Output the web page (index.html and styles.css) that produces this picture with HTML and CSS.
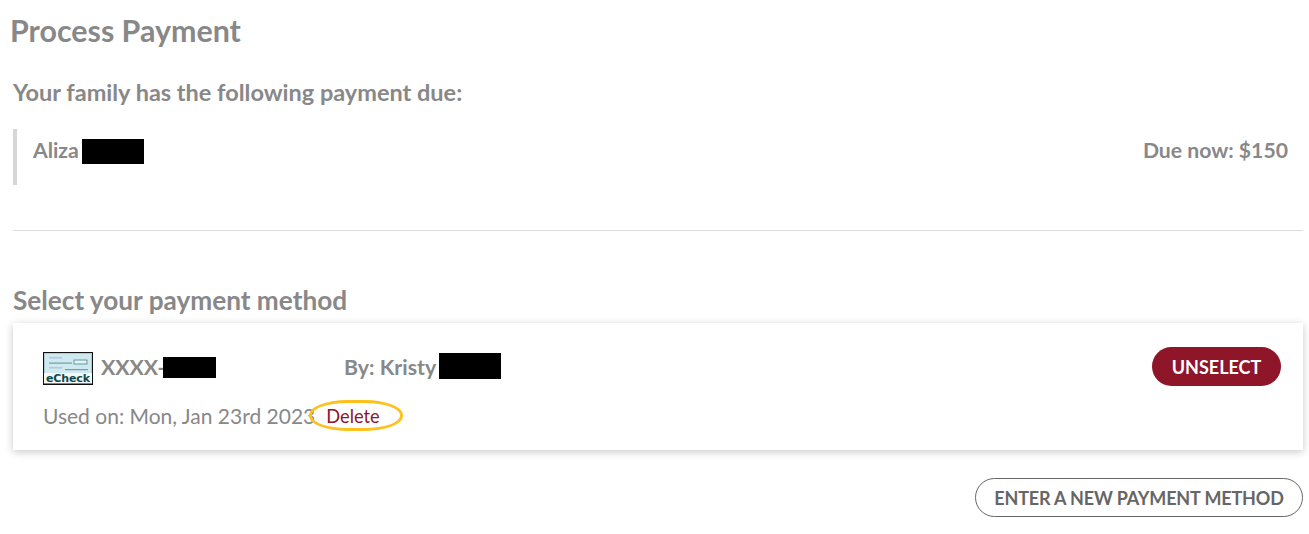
FILE: index.html
```html
<!DOCTYPE html>
<html lang="en">
<head>
<meta charset="UTF-8">
<meta name="viewport" content="width=device-width, initial-scale=1.0">
<title>Process Payment</title>
<link rel="stylesheet" href="styles.css">
</head>
<body>
<div class="container">
    <h1 class="page-title">Process Payment</h1>
    <h2 class="due-title">Your family has the following payment due:</h2>

    <div class="due-row">
        <div class="due-name">Aliza<span class="redact redact-due"></span></div>
        <div class="due-amount">Due now: $150</div>
    </div>

    <hr class="divider">

    <h2 class="method-title">Select your payment method</h2>

    <div class="card">
        <div class="card-top">
            <svg class="echeck" viewBox="0 0 50 33" width="50" height="33">
                <rect x="0.5" y="0.5" width="49" height="32" fill="#d5ebf1" stroke="#111"/>
                <rect x="1.5" y="1.5" width="47" height="20" fill="#d0e8ef" stroke="#8fbcc0" stroke-width="0.6"/>
                <rect x="6" y="5" width="13" height="1.5" fill="#a9cdd4"/>
                <rect x="31" y="8" width="13" height="4" fill="#e4f2f5" stroke="#5f9ba1"/>
                <rect x="6" y="10.5" width="23" height="1.2" fill="#6ba3a9"/>
                <rect x="6" y="15" width="13" height="1.5" fill="#a9cdd4"/>
                <rect x="22" y="17" width="23" height="1.2" fill="#6ba3a9"/>
                <rect x="1" y="21" width="48" height="11" fill="#f4f8f8"/>
                <rect x="0" y="31.5" width="50" height="1.5" fill="#111"/>
                <text x="25" y="30" text-anchor="middle" textLength="44" class="echeck-text">eCheck</text>
            </svg>
            <div class="account">XXXX-<span class="redact redact-account"></span></div>
            <div class="owner">By: Kristy<span class="redact redact-owner"></span></div>
            <button class="btn-unselect">UNSELECT</button>
        </div>
        <div class="card-bottom">
            <span class="used-on">Used on: Mon, Jan 23rd 2023</span>
            <a class="delete-link">Delete</a>
        </div>
    </div>

    <div class="actions">
        <button class="btn-new">ENTER A NEW PAYMENT METHOD</button>
    </div>
</div>
</body>
</html>
```

FILE: styles.css
```css
body {
    margin: 0;
    padding: 0;
    font-family: Lato, sans-serif;
    background-color: #fff;
    color: #888;
}

.container {
    width: 1290px;
    margin-left: 13px;
    padding-top: 11px;
}

.page-title {
    margin: 0 0 0 -3px;
    font-size: 30.4px;
    line-height: 38px;
    font-weight: bold;
}

.due-title {
    margin: 25px 0 0;
    font-size: 23.5px;
    line-height: 36px;
    font-weight: bold;
}

.due-row {
    display: flex;
    justify-content: space-between;
    height: 56px;
    margin-top: 19px;
    padding: 8px 15px 0 16px;
    box-sizing: border-box;
    border-left: 4px solid #d6d6d6;
    font-size: 21.2px;
    font-weight: bold;
    line-height: 27px;
}

.redact {
    display: inline-block;
    background-color: #000;
    vertical-align: top;
}

.redact-due {
    width: 62px;
    height: 25px;
    margin: 2px 0 0 3px;
}

.divider {
    height: 1px;
    margin: 45px 0 0;
    border: none;
    background-color: #ddd;
}

.method-title {
    margin: 51px 0 0;
    font-size: 26.2px;
    line-height: 36px;
    font-weight: bold;
}

.card {
    height: 127px;
    margin-top: 5px;
    padding: 24px 22px 0 30px;
    box-sizing: border-box;
    background-color: #fff;
    box-shadow: 0 2px 8px rgba(0, 0, 0, 0.22);
}

.card-top {
    display: flex;
    align-items: center;
    height: 39px;
    font-size: 21.3px;
    font-weight: bold;
}

.echeck {
    flex-shrink: 0;
    margin: 3px 8px 0 0;
}

.echeck-text {
    font-family: "DejaVu Sans", sans-serif;
    font-size: 11px;
    font-weight: bold;
    fill: #0f4a4f;
}

.account {
    width: 243px;
    white-space: nowrap;
}

.redact-account {
    width: 53px;
    height: 21px;
    margin: 3px 0 0 -3px;
}

.owner {
    flex-grow: 1;
    white-space: nowrap;
}

.redact-owner {
    width: 62px;
    height: 26px;
    margin-top: -1px;
    margin-left: 3px;
}

.btn-unselect {
    width: 129px;
    height: 39px;
    padding: 0;
    background-color: #8f1528;
    color: #fff;
    border: none;
    border-radius: 20px;
    font-family: Lato, sans-serif;
    font-size: 18px;
    font-weight: bold;
    cursor: pointer;
}

.card-bottom {
    display: flex;
    align-items: center;
    margin-top: 14px;
    font-size: 21px;
}

.delete-link {
    display: block;
    width: 74px;
    height: 24px;
    margin-left: -6px;
    padding: 1px 0 0 14px;
    border: 3px solid #fdc11e;
    border-radius: 38px / 15px;
    color: #8f1528;
    font-size: 18.3px;
    line-height: 25px;
}

.actions {
    display: flex;
    justify-content: flex-end;
    margin-top: 28px;
}

.btn-new {
    width: 328px;
    height: 39px;
    padding: 0;
    background-color: #fff;
    color: #666;
    border: 1px solid #666;
    border-radius: 20px;
    font-family: Lato, sans-serif;
    font-size: 18px;
    font-weight: bold;
    letter-spacing: -0.16px;
    cursor: pointer;
}
```
